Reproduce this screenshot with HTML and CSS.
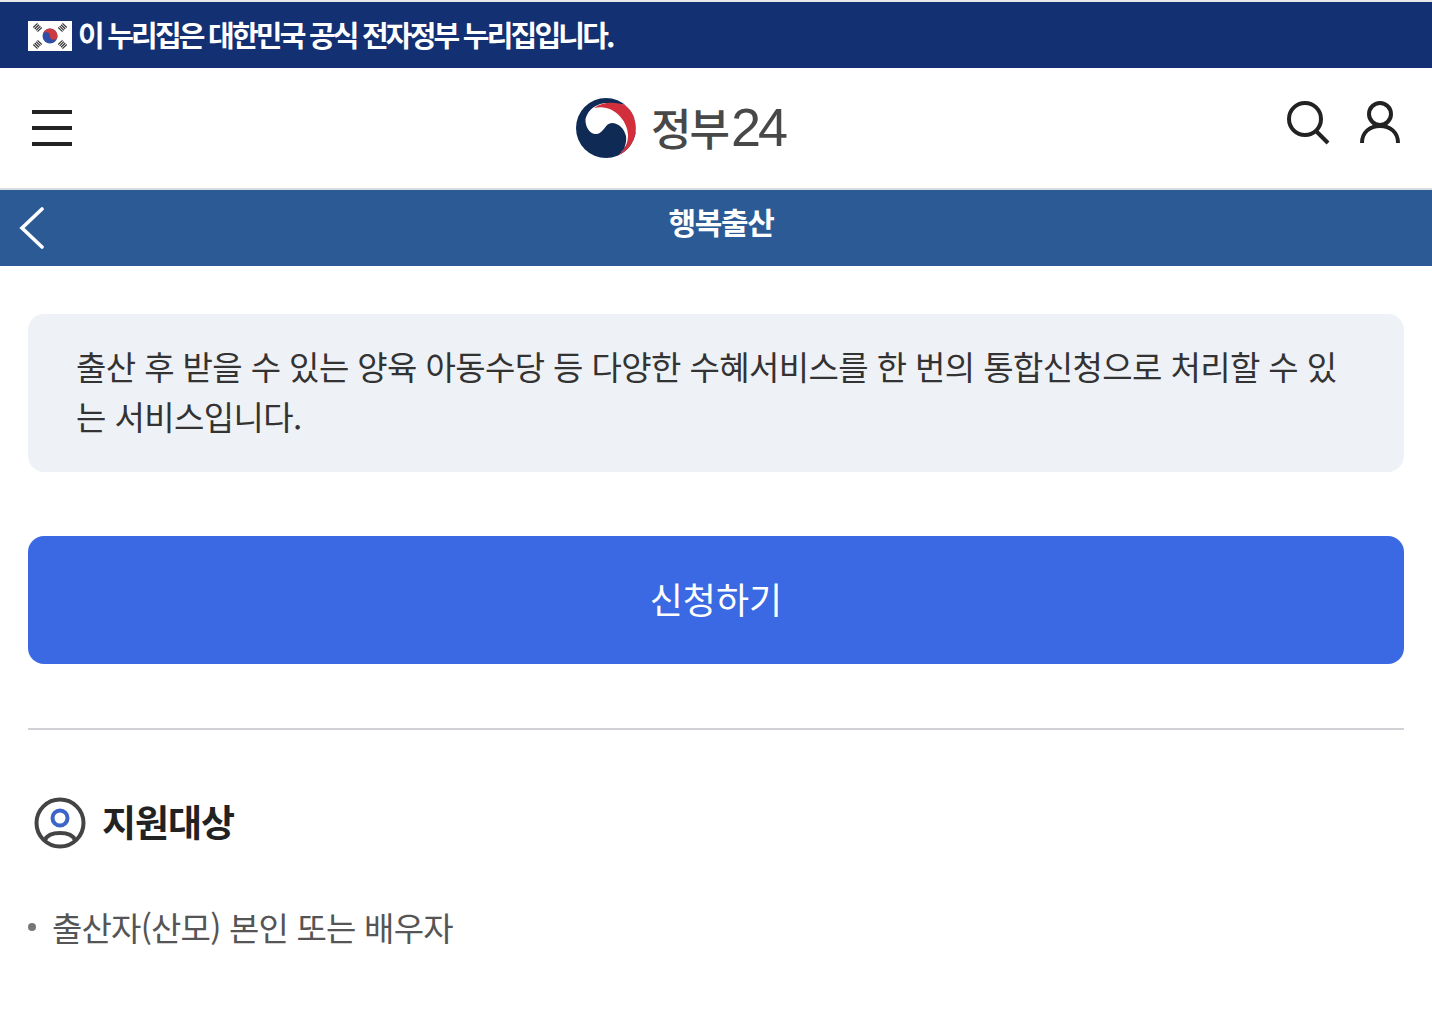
FILE: index.html
```html
<!DOCTYPE html>
<html lang="ko">
  <head>
    <meta charset="UTF-8" />
    <title>행복출산 | 정부24</title>
    <link rel="stylesheet" href="styles.css">
  </head>
  <body>
    <div class="gov_banner">
      <svg class="flag" viewBox="0 0 44 30" width="44" height="30">
        <rect width="44" height="30" fill="#fff" />
        <g stroke="#333" stroke-width="6" stroke-dasharray="1.2 .8">
          <path d="M7 4 12 9" />
          <path d="M37 4 32 9" />
          <path d="M7 26 12 21" />
          <path d="M37 26 32 21" />
        </g>
        <circle cx="22" cy="15" r="7.5" fill="#2f4ea8" />
        <path d="M14.5 15a7.5 7.5 0 0 1 15 0 3.75 3.75 0 0 1-7.5 0 3.75 3.75 0 0 0-7.5 0z" fill="#cd3b40" />
      </svg>
      <span>이 누리집은 대한민국 공식 전자정부 누리집입니다.</span>
    </div>

    <header class="top_header">
      <button class="menu_btn" aria-label="메뉴"><i></i><i></i><i></i></button>
      <a class="logo">
        <svg viewBox="0 0 64 62" width="64" height="62">
          <circle cx="31" cy="31" r="30" fill="#0f2b55" />
          <path d="M10.5 22C13 12 22 6 33 6L52 8 64 30 43 60C49 54 52 46 51 39 49 31 43 26 37 26 30 26 29 36 22 37 15 38 10 30 10.5 22z" fill="#fff" />
          <path d="M19 11C28 4 41 5 50 8A30 30 0 0 1 43 58.5C51 52 53 45 53 38 53 24 38 6 19 11z" fill="#d22f3c" />
        </svg>
        <span class="logo_text">정부<b>24</b></span>
      </a>
      <div class="header_icons">
        <svg viewBox="0 0 44 44" width="44" height="44" fill="none" stroke="#222" stroke-width="4">
          <circle cx="19" cy="18" r="16" />
          <path d="M30 30 42 42" />
        </svg>
        <svg viewBox="0 0 44 44" width="44" height="44" fill="none" stroke="#222" stroke-width="4">
          <circle cx="22" cy="13" r="11" />
          <path d="M4 42C4 31 12 25 22 25S40 31 40 42" />
        </svg>
      </div>
    </header>

    <div class="sub_bar">
      <svg class="back" viewBox="0 0 26 42" width="26" height="42" fill="none" stroke="#fff" stroke-width="3.6" stroke-linecap="round">
        <path d="M23 2 3 21 23 40" />
      </svg>
      <h1>행복출산</h1>
    </div>

    <main class="content">
      <p class="intro">출산 후 받을 수 있는 양육 아동수당 등 다양한 수혜서비스를 한 번의 통합신청으로 처리할 수 있는 서비스입니다.</p>
      <a class="apply_btn">신청하기</a>
      <hr />
      <h2 class="section_title">
        <svg viewBox="0 0 54 54" width="54" height="54" fill="none">
          <circle cx="28" cy="27" r="23.5" stroke="#444" stroke-width="4" />
          <circle cx="28" cy="22" r="7.5" stroke="#3d66c8" stroke-width="4" />
          <path d="M13 44C15 39 21 37 28 37S41 39 43 44" stroke="#444" stroke-width="4" />
        </svg>
        <span>지원대상</span>
      </h2>
      <ul class="target_list">
        <li>출산자(산모) 본인 또는 배우자</li>
      </ul>
    </main>
  </body>
</html>
```

FILE: styles.css
```css
* {
  box-sizing: border-box;
}
body {
  margin: 0;
  background-color: white;
  color: #222;
  font-family: "Noto Sans CJK KR", "Noto Sans", sans-serif;
}
svg {
  display: block;
}

.gov_banner {
  display: flex;
  align-items: center;
  gap: 6px;
  height: 68px;
  padding: 2px 28px 0;
  background-color: #133072;
  border-top: 2px solid #e8e8e8;
  color: white;
  font-size: 29px;
  font-weight: 700;
  letter-spacing: -2.8px;
}
.gov_banner span {
  margin-top: -5px;
}

.top_header {
  display: flex;
  align-items: center;
  justify-content: space-between;
  height: 122px;
  padding: 0 30px 0 32px;
  border-bottom: 2px solid #d8dbe0;
}
.menu_btn {
  display: flex;
  flex-direction: column;
  gap: 12px;
  width: 40px;
  padding: 0;
  border: 0;
  background: none;
}
.menu_btn i {
  display: block;
  height: 4px;
  background-color: #222;
}
.logo {
  display: flex;
  align-items: center;
  gap: 12px;
  margin-left: 2px;
  color: #484848;
}
.logo_text {
  margin-top: -3px;
  font-size: 44px;
  font-weight: 500;
  letter-spacing: -2px;
}
.logo_text b {
  margin-left: 3px;
  font-family: "Liberation Sans", sans-serif;
  font-size: 54px;
  font-weight: 400;
  letter-spacing: -3px;
}
.header_icons {
  display: flex;
  gap: 28px;
  margin-top: -10px;
}

.sub_bar {
  position: relative;
  height: 76px;
  padding-top: 10px;
  background-color: #2c5a94;
  color: white;
  text-align: center;
}
.sub_bar h1 {
  margin: 0 0 0 10px;
  font-size: 30px;
  line-height: 42px;
  font-weight: 700;
  letter-spacing: -1.4px;
}
.back {
  position: absolute;
  left: 19px;
  top: 17px;
}

.content {
  padding: 48px 28px 0;
}
.intro {
  height: 158px;
  margin: 0;
  padding: 27px 48px 0;
  background-color: #eef1f6;
  border-radius: 16px;
  color: #333;
  font-size: 33px;
  line-height: 50px;
  letter-spacing: -0.6px;
}
.apply_btn {
  display: block;
  height: 128px;
  margin-top: 64px;
  background-color: #3a69e3;
  border-radius: 16px;
  color: white;
  font-size: 36px;
  line-height: 124px;
  text-align: center;
}
hr {
  height: 2px;
  margin: 64px 0 0;
  border: 0;
  background-color: #d0d2d6;
}
.section_title {
  display: flex;
  align-items: center;
  gap: 16px;
  height: 54px;
  margin: 66px 0 0 4px;
  color: #222;
  font-size: 37px;
  font-weight: 700;
  letter-spacing: -1px;
}
.section_title span {
  margin-top: -4px;
}
.target_list {
  margin: 52px 0 0;
  padding: 0;
  list-style: none;
}
.target_list li {
  position: relative;
  padding-left: 24px;
  color: #555;
  font-size: 33px;
  line-height: 50px;
  letter-spacing: -0.8px;
}
.target_list li::before {
  content: "";
  position: absolute;
  left: 0;
  top: 21px;
  width: 8px;
  height: 8px;
  border-radius: 50%;
  background-color: #777;
}
```
